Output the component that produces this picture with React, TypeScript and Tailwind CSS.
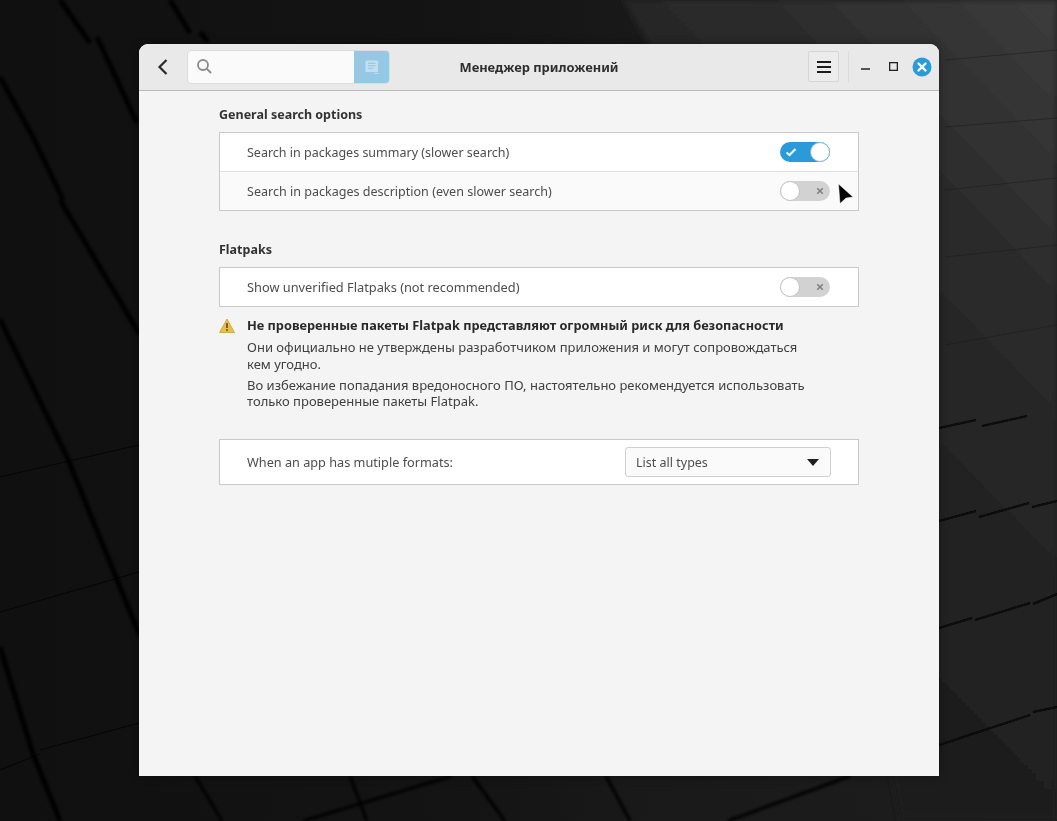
import React from "react";

const font = { fontFamily: '"Noto Sans", "Open Sans", sans-serif' };

function Wallpaper() {
  const wide = [
    "M60 0 L90 43", "M97 37 L137 123", "M0 77 L33 137 L63 200", "M60 200 L140 335", "M0 319 L67 457 L140 636",
    "M0 647 L33 754 L60 821", "M170 0 L190 33", "M200 32 L208 42",
  ];
  const thinLeft = ["M0 612 L139 572", "M40 750 L139 723", "M0 770 L40 754", "M0 477 L139 445"];
  const bottom = ["M195 776 L222 821", "M350 776 L367 821", "M472 776 L505 821", "M606 776 L630 821", "M452 776 L303 821", "M850 776 L728 821"];
  const right = [
    "M939 428 L976 420", "M982 426 L1027 416", "M939 521 L976 511", "M979 517 L1029 503", "M1032 507 L1057 501",
    "M939 628 L972 618", "M975 620 L1030 603", "M1033 604 L1057 594", "M939 745 L1030 715", "M1033 712 L1057 707",
  ];
  const faint = ["M945 345 L1057 325", "M945 257 L1057 245", "M945 190 L1057 178", "M945 127 L1057 118", "M945 60 L1057 50"];
  return (
    <svg className="absolute inset-0" width="1057" height="821" viewBox="0 0 1057 821">
      <defs>
        <linearGradient id="base" x1="0" y1="0" x2="1" y2="0">
          <stop offset="0" stopColor="#101010" />
          <stop offset="0.45" stopColor="#141414" />
          <stop offset="0.6" stopColor="#191919" />
          <stop offset="1" stopColor="#1e1e1e" />
        </linearGradient>
        <linearGradient id="light" x1="1" y1="0" x2="0.45" y2="1">
          <stop offset="0" stopColor="#3c3c3c" />
          <stop offset="0.3" stopColor="#2b2b2b" />
          <stop offset="0.65" stopColor="#212121" />
          <stop offset="1" stopColor="#1c1c1c" />
        </linearGradient>
        <filter id="soft" x="-20%" y="-20%" width="140%" height="140%"><feGaussianBlur stdDeviation="1.8" /></filter>
        <filter id="soft2" x="-20%" y="-20%" width="140%" height="140%"><feGaussianBlur stdDeviation="0.7" /></filter>
        <filter id="soft3" x="-5%" y="-5%" width="110%" height="110%"><feGaussianBlur stdDeviation="3" /></filter>
      </defs>
      <rect width="1057" height="821" fill="url(#base)" />
      <path d="M623 0 H1057 V821 H900 L800 300 Z" fill="url(#light)" filter="url(#soft3)" />
      <g filter="url(#soft)" stroke="#060606" strokeWidth="5" fill="none">
        {wide.map((d) => (
          <path key={d} d={d} />
        ))}
        {bottom.map((d) => (
          <path key={d} d={d} strokeWidth="3" />
        ))}
      </g>
      <g filter="url(#soft2)" stroke="#080808" fill="none">
        {thinLeft.map((d) => (
          <path key={d} d={d} strokeWidth="1.2" opacity="0.7" />
        ))}
        {right.map((d) => (
          <path key={d} d={d} strokeWidth="2" />
        ))}
      </g>
      <g stroke="#1a1a1a" strokeWidth="1" fill="none" opacity="0.5">
        {faint.map((d) => (
          <path key={d} d={d} />
        ))}
      </g>
    </svg>
  );
}

function Toggle({ on }: { on?: boolean }) {
  if (on) {
    return (
      <div className="flex h-5 w-[50px] items-center justify-between rounded-full bg-[#2a9bd8] pl-[5px]">
        <svg width="12" height="12" viewBox="0 0 12 12" fill="none" stroke="#e8f5fb" strokeWidth="2.2">
          <path d="M1.5 6.5 L4.5 9 L10.5 3" />
        </svg>
        <div className="h-5 w-5 rounded-full border border-[#8fb9cf] bg-white" />
      </div>
    );
  }
  return (
    <div className="flex h-5 w-[50px] items-center justify-between rounded-full bg-[#d2d2d2] pr-[6px]">
      <div className="h-5 w-5 rounded-full border border-[#c4c4c4] bg-white" />
      <svg width="8" height="8" viewBox="0 0 10 10" fill="none" stroke="#808080" strokeWidth="2">
        <path d="M1.5 1.5 L8.5 8.5 M8.5 1.5 L1.5 8.5" />
      </svg>
    </div>
  );
}

function Row({ label, on, last, size }: { label: string; on?: boolean; last?: boolean; size: string }) {
  return (
    <div className={`flex items-center justify-between pl-[27px] pr-7 ${last ? "h-[38px]" : "h-[39px] border-b border-[#e2e2e2]"}`}>
      <span className={`${size} pt-[2px] text-[#4d4d4d]`}>{label}</span>
      <Toggle on={on} />
    </div>
  );
}

export default function App() {
  return (
    <div className="relative h-[821px] w-[1057px] overflow-hidden bg-[#141414]" style={font}>
      <Wallpaper />
      <div className="relative ml-[139px] pt-[44px]">
        <div className="flex h-[732px] w-[800px] flex-col overflow-hidden rounded-t-[9px] bg-[#f4f4f4] shadow-[0_0_10px_rgba(0,0,0,0.35)]">
          <header className="flex h-[47px] shrink-0 items-center border-b border-[#b9b9b9] bg-[#e9e9e9] pb-px">
            <div className="flex flex-1 items-center">
              <div className="flex w-[48px] shrink-0 justify-center">
                <svg width="14" height="18" viewBox="0 0 14 18" fill="none" stroke="#2a2a2a" strokeWidth="2.2">
                  <path d="M10.5 2 L3.5 9 L10.5 16" />
                </svg>
              </div>
              <div className="flex h-[34px] w-[203px] shrink-0 overflow-hidden rounded-[4px] border border-[#dcdcdc] bg-[#fafafa]">
                <div className="flex flex-1 items-center pl-2">
                  <svg width="17" height="17" viewBox="0 0 17 17" fill="none" stroke="#8a8a8a" strokeWidth="1.8">
                    <circle cx="7" cy="7" r="5" />
                    <path d="M11 11 L15 15" />
                  </svg>
                </div>
                <div className="flex w-[35px] items-center justify-center bg-[#94c8e5]">
                  <svg width="16" height="16" viewBox="0 0 16 16" fill="none">
                    <rect x="1.5" y="1.5" width="12.5" height="11.5" rx="1" fill="#c3dfef" />
                    <path d="M4 4.3 H11.5 M4 6.8 H11.5 M4 9.3 H9" stroke="#8fc3e0" strokeWidth="1" />
                    <path d="M10.5 14.5 H14.5" stroke="#c3dfef" strokeWidth="1" />
                  </svg>
                </div>
              </div>
            </div>
            <div className="pt-[2px] text-center text-[12.9px] font-bold text-[#2e2e2e]">Менеджер приложений</div>
            <div className="flex flex-1 items-center justify-end">
              <div className="flex h-[31px] w-[31px] shrink-0 items-center justify-center rounded-[2px] border border-[#d6d6d6] bg-[#ececec]">
                <svg width="16" height="14" viewBox="0 0 16 14" stroke="#1c1c1c" strokeWidth="2">
                  <path d="M1 2 H15 M1 7 H15 M1 12 H15" />
                </svg>
              </div>
              <div className="ml-[9px] mr-3 h-[31px] w-px bg-[#dbdbdb]" />
              <div className="flex items-center pr-[7px]">
                <svg className="mr-[19px] mt-[4px]" width="9" height="9" viewBox="0 0 9 9" stroke="#222" strokeWidth="1.4">
                  <path d="M0 5 H9" />
                </svg>
                <svg className="mr-[14px]" width="9" height="9" viewBox="0 0 9 9" fill="none" stroke="#222" strokeWidth="1.3">
                  <rect x="0.65" y="0.65" width="7.7" height="7.7" />
                </svg>
                <svg width="20" height="20" viewBox="0 0 20 20">
                  <circle cx="10" cy="10" r="9.5" fill="#2a9bd8" />
                  <path d="M6.5 6.5 L13.5 13.5 M13.5 6.5 L6.5 13.5" stroke="#fff" strokeWidth="2.4" strokeLinecap="round" />
                </svg>
              </div>
            </div>
          </header>

          <main className="ml-20 w-[640px]">
            <h2 className="mt-[15px] text-[12.5px] font-bold leading-[18px] text-[#333]">General search options</h2>
            <div className="mt-2 border border-[#c9c9c9] bg-[#fafafa]">
              <div className="bg-white">
                <Row label="Search in packages summary (slower search)" on size="text-[12.5px]" />
              </div>
              <Row label="Search in packages description (even slower search)" last size="text-[12.55px]" />
            </div>

            <h2 className="mt-[30px] text-[12.5px] font-bold leading-[18px] text-[#333]">Flatpaks</h2>
            <div className="mt-2 border border-[#c9c9c9] bg-white">
              <Row label="Show unverified Flatpaks (not recommended)" last size="text-[12.8px]" />
            </div>

            <div className="mt-[10px] flex">
              <div className="w-7 shrink-0 pt-[1px]">
                <svg width="16" height="15" viewBox="0 0 16 15">
                  <path d="M8 1 L15.5 14.5 H0.5 Z" fill="#e9bf4c" stroke="#c9a03a" strokeWidth="0.8" strokeLinejoin="round" />
                  <path d="M8 5 V10 M8 11.3 V13" stroke="#5a4a20" strokeWidth="1.6" />
                </svg>
              </div>
              <div className="w-[560px] text-[13px] leading-[17px] text-[#404040]">
                <p className="text-[12.75px] font-bold text-[#2a2a2a]">Не проверенные пакеты Flatpak представляют огромный риск для безопасности</p>
                <p className="mt-[5px]">Они официально не утверждены разработчиком приложения и могут сопровождаться кем угодно.</p>
                <p className="mt-1 leading-4">Во избежание попадания вредоносного ПО, настоятельно рекомендуется использовать только проверенные пакеты Flatpak.</p>
              </div>
            </div>

            <div className="mt-[30px] flex h-[46px] items-center justify-between border border-[#c9c9c9] bg-white pl-[27px] pr-[27px]">
              <span className="pt-[2px] text-[12.7px] text-[#4d4d4d]">When an app has mutiple formats:</span>
              <div className="flex h-[30px] w-[206px] items-center justify-between rounded-[3px] border border-[#cfcfcf] bg-[#fafafa] pl-[10px] pr-[11px]">
                <span className="pt-[2px] text-[12.5px] text-[#4d4d4d]">List all types</span>
                <svg width="12" height="7" viewBox="0 0 12 7">
                  <path d="M0 0 H12 L6 7 Z" fill="#1f1f1f" />
                </svg>
              </div>
            </div>
          </main>
        </div>
      </div>
      <svg className="absolute left-[837px] top-[183px]" width="18" height="22" viewBox="0 0 18 22">
        <path d="M1.5 1 L16 14 L9 15 L3 20.5 Z" fill="#000" stroke="#fff" strokeOpacity="0.6" strokeWidth="0.8" />
      </svg>
    </div>
  );
}
